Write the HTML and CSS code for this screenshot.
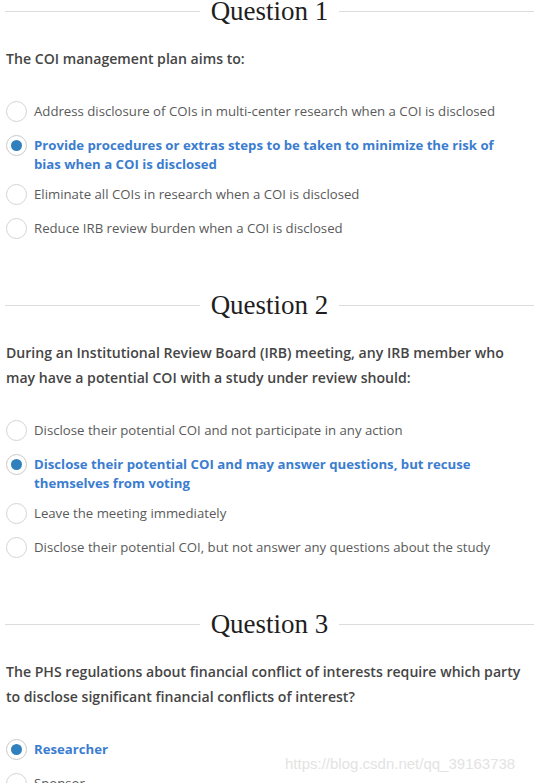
FILE: index.html
```html
<!DOCTYPE html>
<html>
<head>
<meta charset="utf-8">
<link rel="stylesheet" href="styles.css">
</head>
<body>
<div class="page">
  <section class="question">
    <h2 class="heading"><span class="heading-text">Question 1</span></h2>
    <p class="qtext">The COI management plan aims to:</p>
    <ul class="options">
      <li class="option"><span class="radio"></span><span class="label">Address disclosure of COIs in multi-center research when a COI is disclosed</span></li>
      <li class="option selected"><span class="radio"></span><span class="label">Provide procedures or extras steps to be taken to minimize the risk of bias when a COI is disclosed</span></li>
      <li class="option"><span class="radio"></span><span class="label">Eliminate all COIs in research when a COI is disclosed</span></li>
      <li class="option"><span class="radio"></span><span class="label">Reduce IRB review burden when a COI is disclosed</span></li>
    </ul>
  </section>
  <section class="question">
    <h2 class="heading"><span class="heading-text">Question 2</span></h2>
    <p class="qtext">During an Institutional Review Board (IRB) meeting, any IRB member who may have a potential COI with a study under review should:</p>
    <ul class="options">
      <li class="option"><span class="radio"></span><span class="label">Disclose their potential COI and not participate in any action</span></li>
      <li class="option selected"><span class="radio"></span><span class="label">Disclose their potential COI and may answer questions, but recuse themselves from voting</span></li>
      <li class="option"><span class="radio"></span><span class="label">Leave the meeting immediately</span></li>
      <li class="option"><span class="radio"></span><span class="label">Disclose their potential COI, but not answer any questions about the study</span></li>
    </ul>
  </section>
  <section class="question">
    <h2 class="heading"><span class="heading-text">Question 3</span></h2>
    <p class="qtext">The PHS regulations about financial conflict of interests require which party to disclose significant financial conflicts of interest?</p>
    <ul class="options">
      <li class="option selected"><span class="radio"></span><span class="label">Researcher</span></li>
      <li class="option"><span class="radio"></span><span class="label">Sponsor</span></li>
      <li class="option"><span class="radio"></span><span class="label">Institution</span></li>
      <li class="option"><span class="radio"></span><span class="label">IRB</span></li>
    </ul>
  </section>
</div>
<div class="watermark">https://blog.csdn.net/qq_39163738</div>
</body>
</html>
```

FILE: styles.css
```css
html, body {
  margin: 0;
  padding: 0;
  background: #ffffff;
}
body {
  font-family: "Open Sans", "Liberation Sans", sans-serif;
  overflow: hidden;
}
.page {
  padding: 0 20px 0 5px;
}
.question + .question {
  margin-top: 52px;
}
.heading {
  margin: 0;
  display: flex;
  align-items: center;
  gap: 11px;
  height: 22px;
  font-family: "Liberation Serif", "DejaVu Serif", serif;
  font-weight: normal;
  font-size: 27px;
  line-height: 22px;
  color: #1e1e1e;
}
.heading::before,
.heading::after {
  content: "";
  flex: 1;
  height: 1px;
  background: #dcdcdc;
}
.heading-text {
  white-space: nowrap;
}
.qtext {
  margin: 24px 13px 0 1px;
  font-size: 14.1px;
  line-height: 25px;
  font-weight: 600;
  color: #454545;
}
.options {
  list-style: none;
  margin: 31px 13px 0 0;
  padding: 0;
  display: flex;
  flex-direction: column;
  gap: 11px;
}
.option {
  display: flex;
  align-items: flex-start;
  min-height: 23px;
  font-size: 13.2px;
  line-height: 19px;
  color: #5a5a5a;
}
.radio {
  flex: 0 0 auto;
  box-sizing: border-box;
  width: 21px;
  height: 21px;
  margin: -1px 7px 0 1px;
  border: 1px solid #d4d4d4;
  border-radius: 50%;
  display: flex;
  align-items: center;
  justify-content: center;
  background: #fff;
}
.selected .radio {
  border-color: #c9c9c9;
}
.selected .radio::after {
  content: "";
  width: 11px;
  height: 11px;
  border-radius: 50%;
  background: #2f80bd;
}
.selected .label {
  font-weight: 700;
  color: #3b7dcf;
}
.watermark {
  position: absolute;
  left: 285px;
  top: 755px;
  font-family: "Liberation Sans", Arial, sans-serif;
  font-size: 15px;
  line-height: 18px;
  color: #e3e3e3;
  white-space: nowrap;
}
```
